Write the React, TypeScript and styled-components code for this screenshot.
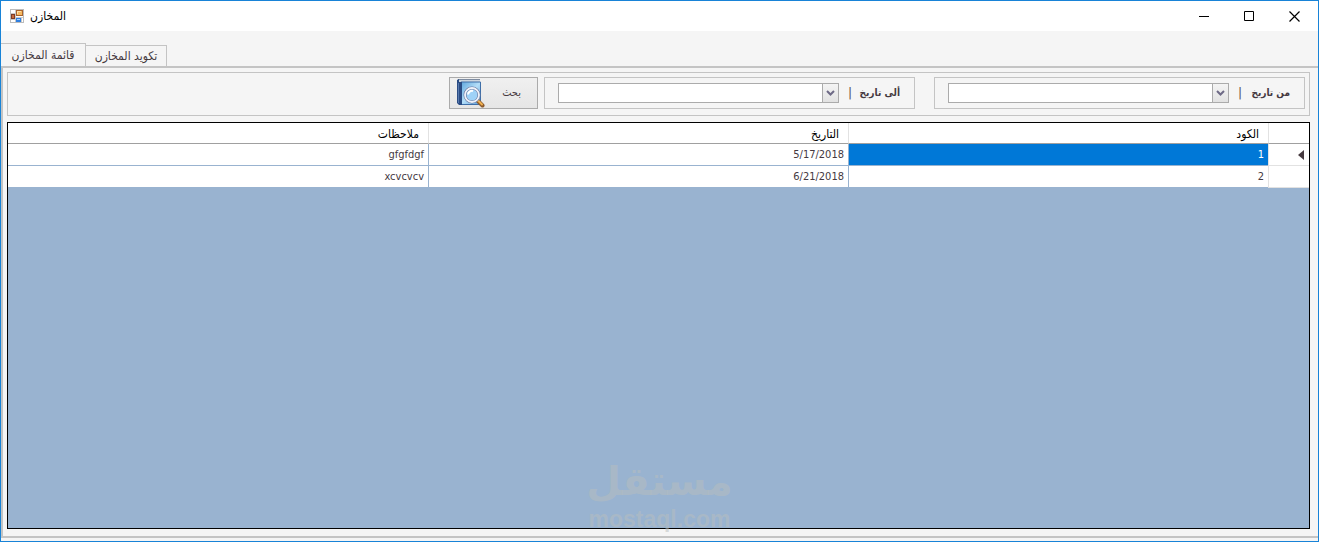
import React from "react";
import styled, { createGlobalStyle, css } from "styled-components";

const line = "#c4c4c4";

const GlobalStyle = createGlobalStyle`
  * { box-sizing: border-box; }
  body {
    margin: 0;
    font: 11px/16px "DejaVu Sans Condensed", "DejaVu Sans", sans-serif;
    color: #45393f;
  }
  button, input { font: inherit; color: inherit; margin: 0; }
`;

const Window = styled.div`
  position: relative;
  display: flex;
  flex-direction: column;
  min-height: 100vh;
  border: 1px solid #1883d7;
  background: #f5f5f5;
`;

const TitleBar = styled.header`
  display: flex;
  align-items: center;
  height: 30px;
  padding: 0 1px 0 9px;
  background: #fff;
  color: #000;
`;

const Title = styled.h1`
  flex: 1;
  margin: 0 6px;
  font-size: 12px;
  font-weight: 400;
`;

const CaptionButton = styled.button`
  display: grid;
  place-items: center;
  width: 45px;
  height: 28px;
  padding: 0;
  border: 0;
  background: none;
`;

const Tabs = styled.div`
  display: flex;
  align-items: flex-end;
  height: 35px;
`;

const Tab = styled.button<{ $active?: boolean }>`
  width: ${(p) => (p.$active ? 85 : 82)}px;
  height: ${(p) => (p.$active ? 23 : 21)}px;
  padding: 0;
  border: 1px solid ${line};
  border-bottom: 0;
  background: #f5f5f5;
  font-size: 12px;
  ${(p) => (p.$active ? css`border-left: 0;` : css`margin-left: -1px;`)}
`;

const Panel = styled.main`
  flex: 1;
  display: flex;
  flex-direction: column;
  gap: 6px;
  margin-bottom: 3px;
  padding: 4px 8px 7px 4px;
  border: solid ${line};
  border-width: 2px 0 2px 2px;
`;

const FilterBar = styled.form`
  display: flex;
  align-items: flex-start;
  height: 44px;
  padding: 4px;
  border: 1px solid ${line};
`;

const Group = styled.div`
  display: flex;
  align-items: center;
  width: 371px;
  height: 32px;
  padding: 0 14px 0 13px;
  margin-left: 19px;
  border: 1px solid ${line};
  & + & { margin-left: 6px; }
`;

const Label = styled.label`
  width: 48px;
  font-weight: 700;
  font-size: 10px;
`;

const Bar = styled.span`
  width: 13px;
  font-size: 12px;
  line-height: 16px;
`;

const DateBox = styled.div`
  flex: 1;
  display: flex;
  flex-direction: row-reverse;
  height: 20px;
  border: 1px solid #ababab;
  background: #fff;
`;

const DateInput = styled.input`
  flex: 1;
  min-width: 0;
  padding: 0 4px;
  border: 0;
  outline: 0;
  background: transparent;
`;

const DropButton = styled.button`
  display: grid;
  place-items: center;
  width: 16px;
  padding: 0;
  border: 0;
  border-left: 1px solid #ababab;
  background: linear-gradient(#f4f4f4, #e2e2e2);
`;

const SearchButton = styled.button`
  display: flex;
  align-items: center;
  justify-content: space-between;
  width: 89px;
  height: 32px;
  padding: 0 16px 0 6px;
  border: 1px solid #ababab;
  background: linear-gradient(#f0f0f0, #e6e6e6);
`;

const GridBox = styled.section`
  flex: 1;
  border: 1px solid #000;
  background: #99b3d0;
`;

const Table = styled.table`
  width: 100%;
  table-layout: fixed;
  border-collapse: separate;
  border-spacing: 0;
  background: #fff;
`;

const HeadCell = styled.th<{ $marker?: boolean }>`
  width: ${(p) => (p.$marker ? "41px" : "auto")};
  height: 21px;
  padding: 2px 9px 0;
  border-bottom: 1px solid #a0a0a0;
  border-left: 1px solid #e2e2e2;
  color: #000;
  font-size: 12px;
  font-weight: 400;
  text-align: right;
  &:last-child { border-left: 0; }
`;

const Cell = styled.td<{ $selected?: boolean }>`
  height: 22px;
  padding: 0 4px;
  border-bottom: 1px solid #99b3d0;
  border-left: 1px solid #99b3d0;
  background: ${(p) => (p.$selected ? "#0078d7" : "#fff")};
  color: ${(p) => (p.$selected ? "#fff" : "inherit")};
  text-align: right;
  &:last-child { border-left: 0; }
`;

const MarkerCell = styled.td`
  padding: 0 5px;
  border-bottom: 1px solid #e2e2e2;
  border-left: 1px solid #e2e2e2;
  svg { display: block; }
`;

const Watermark = styled.div`
  position: absolute;
  left: 50%;
  bottom: 10px;
  transform: translateX(-50%);
  display: flex;
  flex-direction: column;
  align-items: center;
  gap: 2px;
  color: rgba(184, 190, 190, 0.5);
  font-weight: 700;
  pointer-events: none;
`;

const WatermarkName = styled.span`
  font-family: "DejaVu Sans", sans-serif;
  font-size: 40px;
  line-height: 48px;
`;

const WatermarkSite = styled.span`
  font-family: "Liberation Sans", sans-serif;
  font-size: 23px;
  line-height: 24px;
`;

const AppIcon = () => (
  <svg width="14" height="14" viewBox="0 0 14 14" aria-hidden="true">
    <rect x="0.5" y="0.5" width="13" height="13" fill="#fff" stroke="#bcbcbc" />
    <path d="M5.500 1v12M1 4.500h4M1 10.500h4M6 8.500h7M11.500 9v4" stroke="#c8c8c8" />
    <rect x="6.500" y="1.500" width="6" height="5" fill="#f5b860" stroke="#a9642c" />
    <path d="M7 2.500h4M7.500 2v3" stroke="#ffe0a4" />
    <rect x="1.500" y="5.500" width="3" height="4" fill="#c66a3c" stroke="#7c3b25" />
    <rect x="6" y="9" width="5" height="4" fill="#2f7fe0" />
    <path d="M7 10.500h3" stroke="#a5d3ff" />
  </svg>
);

const BookIcon = () => (
  <svg width="29" height="30" viewBox="0 0 29 30" aria-hidden="true">
    <defs>
      <linearGradient id="cover" x1="0" y1="0" x2="1" y2="1">
        <stop offset="0" stopColor="#5fa6dd" />
        <stop offset="0.5" stopColor="#b4def8" />
        <stop offset="1" stopColor="#5b9fdc" />
      </linearGradient>
    </defs>
    <path d="M2 1h22v3H2z" fill="#cdd5de" />
    <path d="M2 1.500h22" stroke="#7d8ba0" />
    <path d="M5 4h19.500v22.500H5z" fill="url(#cover)" stroke="#3f6fa8" />
    <path d="M1 2l2-1v3h3v23H3l-2-2z" fill="#2b4c84" />
    <path d="M2.500 5v20" stroke="#5779ae" />
    <path d="M21.500 22.500l5 5" stroke="#8c5a2c" strokeWidth="4" strokeLinecap="round" />
    <path d="M22 22.500l4 4" stroke="#f0b050" strokeWidth="2" strokeLinecap="round" />
    <circle cx="16" cy="17" r="7" fill="#9fd2f7" stroke="#66749c" strokeWidth="3" />
    <circle cx="16" cy="17" r="7" fill="none" stroke="#eef2fa" strokeWidth="1.800" />
    <path d="M12 16.500a4 4 0 0 1 5-3.500" fill="none" stroke="#fff" strokeWidth="2" />
  </svg>
);

const Chevron = () => (
  <svg width="9" height="7" viewBox="0 0 9 7" aria-hidden="true">
    <path d="M1 1l3.500 3.500L8 1" fill="none" stroke="#6e6a86" strokeWidth="2" />
  </svg>
);

const DateField = ({ id, label }: { id: string; label: string }) => (
  <Group>
    <Label htmlFor={id}>{label}</Label>
    <Bar aria-hidden="true">|</Bar>
    <DateBox>
      <DateInput id={id} type="text" />
      <DropButton type="button" aria-label={label}>
        <Chevron />
      </DropButton>
    </DateBox>
  </Group>
);

const rows = [
  { code: 1, date: "5/17/2018", notes: "gfgfdgf" },
  { code: 2, date: "6/21/2018", notes: "xcvcvcv" },
];

export default function App() {
  return (
    <>
      <GlobalStyle />
      <Window>
        <TitleBar>
          <AppIcon />
          <Title>المخازن</Title>
          <CaptionButton aria-label="تصغير">
            <svg width="11" height="11"><path d="M0 5.500h10" stroke="#000" /></svg>
          </CaptionButton>
          <CaptionButton aria-label="تكبير">
            <svg width="11" height="11"><path d="M.5.5h9v9h-9z" fill="none" stroke="#000" /></svg>
          </CaptionButton>
          <CaptionButton aria-label="إغلاق">
            <svg width="11" height="11"><path d="M.5.5l10 10M10.500.5l-10 10" stroke="#000" strokeWidth="1.200" /></svg>
          </CaptionButton>
        </TitleBar>
        <Tabs role="tablist">
          <Tab role="tab" aria-selected="true" $active>قائمة المخازن</Tab>
          <Tab role="tab" aria-selected="false">تكويد المخازن</Tab>
        </Tabs>
        <Panel dir="rtl">
          <FilterBar>
            <DateField id="from" label="من تاريخ" />
            <DateField id="to" label="ألى تاريخ" />
            <SearchButton type="button">
              بحث
              <BookIcon />
            </SearchButton>
          </FilterBar>
          <GridBox>
            <Table>
              <thead>
                <tr>
                  <HeadCell $marker />
                  <HeadCell>الكود</HeadCell>
                  <HeadCell>التاريخ</HeadCell>
                  <HeadCell>ملاحظات</HeadCell>
                </tr>
              </thead>
              <tbody>
                {rows.map((row, i) => (
                  <tr key={row.code}>
                    <MarkerCell>
                      {i === 0 && (
                        <svg width="6" height="10"><path d="M6 0v10L0 5z" fill="#45393f" /></svg>
                      )}
                    </MarkerCell>
                    <Cell $selected={i === 0}>{row.code}</Cell>
                    <Cell>{row.date}</Cell>
                    <Cell>{row.notes}</Cell>
                  </tr>
                ))}
              </tbody>
            </Table>
          </GridBox>
        </Panel>
        <Watermark>
          <WatermarkName lang="ar">مستقل</WatermarkName>
          <WatermarkSite>mostaql.com</WatermarkSite>
        </Watermark>
      </Window>
    </>
  );
}
